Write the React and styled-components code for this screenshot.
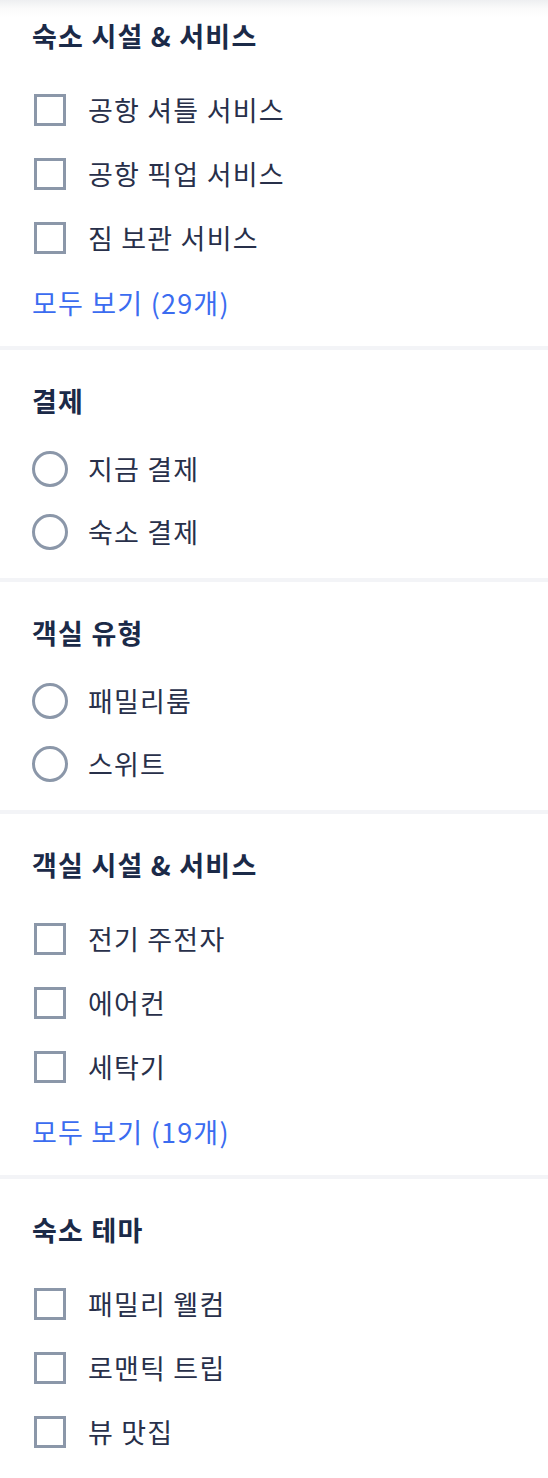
import React from "react";
import styled, { createGlobalStyle } from "styled-components";

const GlobalStyle = createGlobalStyle`
  * { box-sizing: border-box; }
  html, body { margin: 0; padding: 0; background: #ffffff; }
  body {
    font-family: "Noto Sans CJK KR", "Noto Sans", sans-serif;
    -webkit-font-smoothing: antialiased;
  }
`;

const Page = styled.div`
  width: 548px;
  background: linear-gradient(to bottom, #eeeff1 0px, #fafafa 8px, #ffffff 18px);
`;

const Section = styled.section`
  padding: ${(p) => (p.$first ? "18px" : "33px")} 32px ${(p) => (p.$radio ? "15px" : "12px")};
  border-bottom: ${(p) => (p.$last ? "none" : "4px solid #f3f4f7")};
`;

const Heading = styled.h3`
  margin: 0;
  height: 36px;
  line-height: 36px;
  font-size: 27px;
  letter-spacing: 1.2px;
  font-weight: 700;
  color: #1b2a48;
  white-space: nowrap;
`;

const List = styled.div`
  display: flex;
  flex-direction: column;
  margin-top: ${(p) => (p.$radio ? "18px" : "24px")};
`;

const Row = styled.label`
  display: flex;
  align-items: center;
  height: ${(p) => (p.$radio ? "63px" : "64px")};
  cursor: pointer;
`;

const IconBox = styled.span`
  width: 36px;
  height: 36px;
  display: flex;
  align-items: center;
  justify-content: center;
  flex: none;
`;

const Check = styled.span`
  width: 32px;
  height: 32px;
  border: 3px solid #8b97a9;
  background: #fff;
`;

const Radio = styled.span`
  width: 36px;
  height: 36px;
  border: 3px solid #8b97a9;
  border-radius: 50%;
  background: #fff;
`;

const Label = styled.span`
  margin-left: 20px;
  font-size: 27px;
  letter-spacing: 1.2px;
  line-height: 36px;
  font-weight: 400;
  color: #28304a;
  white-space: nowrap;
`;

const MoreLink = styled.a`
  display: flex;
  align-items: center;
  height: 64px;
  font-size: 27px;
  letter-spacing: 1.2px;
  color: #3b6cf0;
  text-decoration: none;
  white-space: nowrap;
`;

const sections = [
  {
    title: "숙소 시설 & 서비스",
    type: "check",
    items: ["공항 셔틀 서비스", "공항 픽업 서비스", "짐 보관 서비스"],
    more: "모두 보기 (29개)",
  },
  { title: "결제", type: "radio", items: ["지금 결제", "숙소 결제"] },
  { title: "객실 유형", type: "radio", items: ["패밀리룸", "스위트"] },
  {
    title: "객실 시설 & 서비스",
    type: "check",
    items: ["전기 주전자", "에어컨", "세탁기"],
    more: "모두 보기 (19개)",
  },
  { title: "숙소 테마", type: "check", items: ["패밀리 웰컴", "로맨틱 트립", "뷰 맛집"] },
];

export default function App() {
  return (
    <Page>
      <GlobalStyle />
      {sections.map((s, i) => {
        const radio = s.type === "radio";
        return (
          <Section key={s.title} $first={i === 0} $radio={radio} $last={i === sections.length - 1}>
            <Heading>{s.title}</Heading>
            <List $radio={radio}>
              {s.items.map((item) => (
                <Row key={item} $radio={radio}>
                  <IconBox>{radio ? <Radio /> : <Check />}</IconBox>
                  <Label>{item}</Label>
                </Row>
              ))}
              {s.more && <MoreLink href="#">{s.more}</MoreLink>}
            </List>
          </Section>
        );
      })}
    </Page>
  );
}
